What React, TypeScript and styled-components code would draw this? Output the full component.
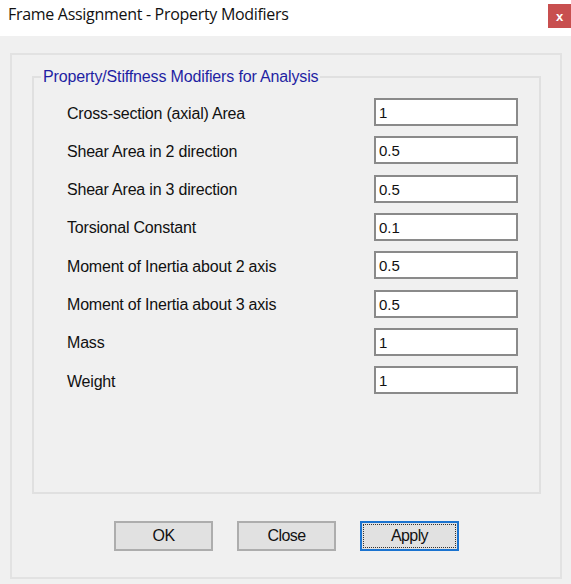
import React from "react";
import styled, { createGlobalStyle } from "styled-components";

const Global = createGlobalStyle`
  html, body { margin: 0; padding: 0; background: #f0f0f0; }
  body { font-family: "Liberation Sans", Arial, sans-serif; }
`;

const Window = styled.div`
  width: 571px;
  height: 584px;
  background: #f0f0f0;
  display: flex;
  flex-direction: column;
  overflow: hidden;
`;

const TitleBar = styled.div`
  height: 36px;
  background: #ffffff;
  display: flex;
  align-items: flex-start;
  flex-shrink: 0;
`;

const Title = styled.div`
  font-family: "Open Sans", "Noto Sans", sans-serif;
  font-size: 16px;
  color: #111;
  padding: 3px 0 0 8px;
  letter-spacing: -0.3px;
`;

const CloseBtn = styled.div`
  margin-left: auto;
  margin-top: 4px;
  width: 23px;
  height: 24px;
  background: #c84f4f;
  color: #fff;
  font-family: "Liberation Sans", Arial, sans-serif;
  font-weight: bold;
  font-size: 13px;
  display: flex;
  align-items: center;
  justify-content: center;
`;

const Body = styled.div`
  flex: 1;
  padding: 17px 9px 0 10px;
`;

const Panel = styled.div`
  box-sizing: border-box;
  height: 526px;
  border: 2px solid #e2e2e2;
  padding: 13px 19px 0 20px;
  display: flex;
  flex-direction: column;
`;

const Group = styled.fieldset`
  box-sizing: border-box;
  margin: 0;
  height: 426px;
  border: 2px solid #e0e0e0;
  padding: 12px 21px 0 33px;
  min-width: 0;
`;

const Legend = styled.legend`
  margin-left: -26px;
  padding: 0 2px;
  font-size: 16px;
  line-height: 18px;
  color: #1f1fa3;
  letter-spacing: -0.15px;
`;

const Rows = styled.div`
  display: grid;
  grid-template-columns: 1fr 144px;
  row-gap: 10.33px;
  align-items: center;
`;

const Label = styled.div`
  font-size: 16px;
  color: #111;
  letter-spacing: -0.2px;
  padding-top: 3px;
`;

const Input = styled.div`
  box-sizing: border-box;
  height: 28px;
  border: 2px solid #8a8a8a;
  background: #fff;
  font-size: 15px;
  color: #111;
  padding: 4px 0 0 3px;
`;

const Buttons = styled.div`
  display: flex;
  justify-content: center;
  gap: 24px;
  margin-top: 27px;
`;

const Button = styled.div<{ $focus?: boolean }>`
  box-sizing: border-box;
  width: 99px;
  height: 30px;
  background: #e1e1e1;
  border: 2px solid ${(p) => (p.$focus ? "#1a73d0" : "#adadad")};
  display: flex;
  align-items: center;
  justify-content: center;
  font-size: 16px;
  color: #111;
  letter-spacing: -0.6px;
  position: relative;
  ${(p) =>
    p.$focus
      ? `&::after { content: ""; position: absolute; inset: 1px; border: 1px dotted #333; }`
      : ""}
`;

const rows: [string, string][] = [
  ["Cross-section (axial) Area", "1"],
  ["Shear Area in 2 direction", "0.5"],
  ["Shear Area in 3 direction", "0.5"],
  ["Torsional Constant", "0.1"],
  ["Moment of Inertia about 2 axis", "0.5"],
  ["Moment of Inertia about 3 axis", "0.5"],
  ["Mass", "1"],
  ["Weight", "1"],
];

export default function App() {
  return (
    <>
      <Global />
      <Window>
        <TitleBar>
          <Title>Frame Assignment - Property Modifiers</Title>
          <CloseBtn>x</CloseBtn>
        </TitleBar>
        <Body>
          <Panel>
            <Group>
              <Legend>Property/Stiffness Modifiers for Analysis</Legend>
              <Rows>
                {rows.map(([l, v]) => (
                  <React.Fragment key={l}>
                    <Label>{l}</Label>
                    <Input>{v}</Input>
                  </React.Fragment>
                ))}
              </Rows>
            </Group>
            <Buttons>
              <Button>OK</Button>
              <Button>Close</Button>
              <Button $focus>Apply</Button>
            </Buttons>
          </Panel>
        </Body>
      </Window>
    </>
  );
}
